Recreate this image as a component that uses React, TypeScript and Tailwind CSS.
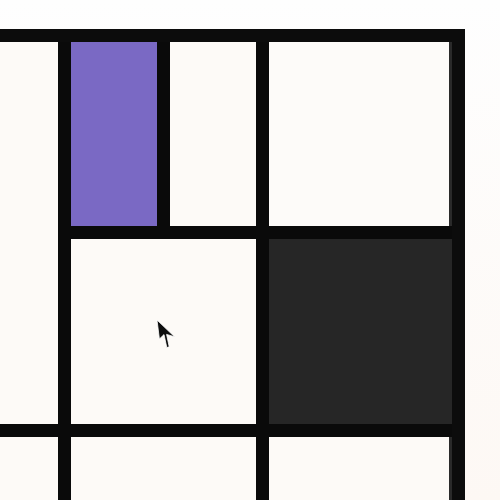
import React from "react";

function Cursor() {
    return (
        <svg width="26" height="34" viewBox="0 0 26 34" className="absolute left-[154px] top-[318px]">
            <path
                d="M3 2 L5.4 21 L10 16.6 L12.8 29.6 L15.2 28.8 L12.6 16.4 L20.6 18.8 Z"
                fill="#0d0d0d"
                stroke="#fff"
                strokeWidth="0.8"
                strokeLinejoin="round"
            />
        </svg>
    );
}

export default function App() {
    return (
        <div className="relative w-[500px] h-[500px] overflow-hidden bg-gradient-to-b from-[#fefefe] to-[#fdf8f4]">
            <div className="pt-[29px] -ml-[41px]">
                <div className="grid grid-cols-[86px_86px_86px_183px] grid-rows-[184px_185px_185px] gap-[13px] w-fit bg-[#0a0a0a] border-[13px] border-[#0c0c0c]">
                    <div className="row-span-2 bg-[#fdfaf7]" />
                    <div className="bg-[#7a69c4]" />
                    <div className="bg-[#fdfaf7]" />
                    <div className="bg-[#fdfbf9] border-r-[3px] border-[#2a2a2a]" />
                    <div className="col-span-2 bg-[#fdfaf7]" />
                    <div className="bg-[#262626]" />
                    <div className="bg-[#fdfaf7]" />
                    <div className="col-span-2 bg-[#fdfaf7]" />
                    <div className="bg-[#fdfaf7] border-r-[3px] border-[#2a2a2a]" />
                </div>
            </div>
            <Cursor />
        </div>
    );
}
